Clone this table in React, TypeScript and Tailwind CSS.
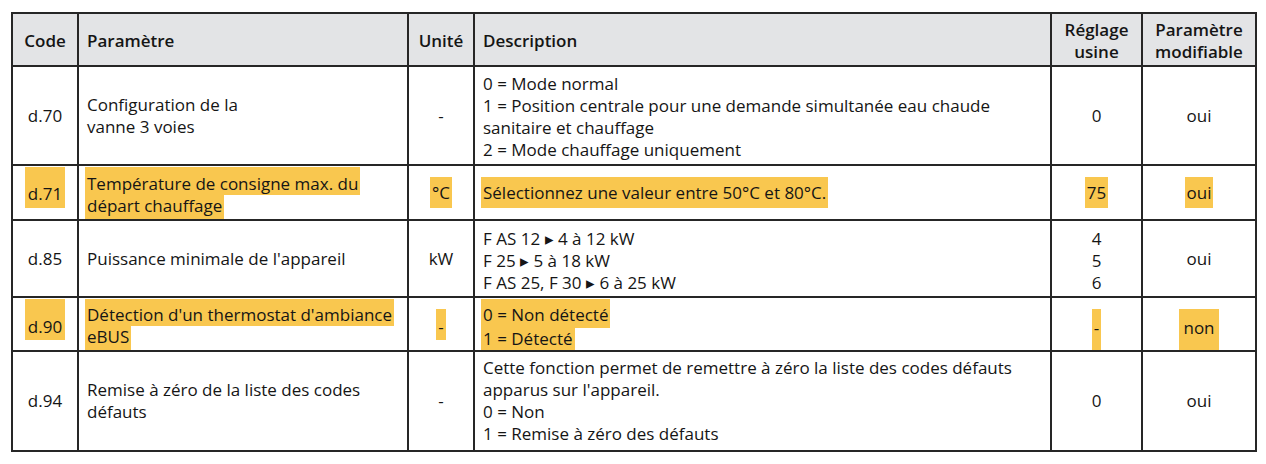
import type { ReactNode } from "react"

const hl = "bg-[#f9c74f]"

function Head({ children, align = "center" }: { children: ReactNode; align?: "left" | "center" }) {
  return (
    <div
      className={`bg-[#e3e4e6] flex items-center pt-[2px] font-semibold ${
        align === "left" ? "justify-start pl-2" : "justify-center text-center"
      }`}
    >
      <div>{children}</div>
    </div>
  )
}

function Cell({ children, className = "" }: { children: ReactNode; className?: string }) {
  return <div className={`bg-white flex ${className}`}>{children}</div>
}

export default function App() {
  return (
    <div className="w-[1266px] h-[464px] bg-white pt-[12px] pl-[11px] font-['Open_Sans',sans-serif] font-medium text-[17px] leading-[22px] text-[#151515]">
      <div className="grid w-[1246px] grid-cols-[64px_328px_64px_575px_89px_112px] grid-rows-[51px_97px_53px_75px_52px_98px] gap-[2px] p-[2px] bg-[#262626]">
        {/* header */}
        <Head>Code</Head>
        <Head align="left">Paramètre</Head>
        <Head>Unité</Head>
        <Head align="left">Description</Head>
        <Head>
          Réglage
          <br />
          usine
        </Head>
        <Head>
          Paramètre
          <br />
          modifiable
        </Head>

        {/* d.70 */}
        <Cell className="items-center justify-center">d.70</Cell>
        <Cell className="items-center pl-2">
          <div>
            Configuration de la
            <br />
            vanne 3 voies
          </div>
        </Cell>
        <Cell className="items-center justify-center">-</Cell>
        <Cell className="items-center pl-2 pt-[2px]">
          <div>
            <div>0 = Mode normal</div>
            <div>1 = Position centrale pour une demande simultanée eau chaude</div>
            <div>sanitaire et chauffage</div>
            <div>2 = Mode chauffage uniquement</div>
          </div>
        </Cell>
        <Cell className="items-center justify-center">0</Cell>
        <Cell className="items-center justify-center">oui</Cell>

        {/* d.71 */}
        <Cell className="items-start justify-center pt-[1px]">
          <span className={`${hl} px-[3px] pt-[16px] pb-[3px]`}>d.71</span>
        </Cell>
        <Cell className="flex-col items-start pt-[1px] pl-[6px]">
          <span className={`${hl} block px-[2px] pt-[6px]`}>Température de consigne max. du</span>
          <span className={`${hl} block px-[2px] pb-[2px]`}>départ chauffage</span>
        </Cell>
        <Cell className="items-start justify-center pt-[11px]">
          <span className={`${hl} px-[2px] pt-[5px] pb-[4px]`}>°C</span>
        </Cell>
        <Cell className="items-start pt-[11px] pl-[6px]">
          <span className={`${hl} px-[2px] pt-[5px] pb-[4px]`}>Sélectionnez une valeur entre 50°C et 80°C.</span>
        </Cell>
        <Cell className="items-start justify-center pt-[11px]">
          <span className={`${hl} px-[2px] pt-[5px] pb-[4px]`}>75</span>
        </Cell>
        <Cell className="items-start justify-center pt-[11px]">
          <span className={`${hl} px-[2px] pt-[5px] pb-[4px]`}>oui</span>
        </Cell>

        {/* d.85 */}
        <Cell className="items-center justify-center">d.85</Cell>
        <Cell className="items-center pl-2">Puissance minimale de l'appareil</Cell>
        <Cell className="items-center justify-center">kW</Cell>
        <Cell className="items-center pl-2 pt-[4px]">
          <div>
            <div>F AS 12 ▸ 4 à 12 kW</div>
            <div>F 25 ▸ 5 à 18 kW</div>
            <div>F AS 25, F 30 ▸ 6 à 25 kW</div>
          </div>
        </Cell>
        <Cell className="items-center justify-center pt-[4px]">
          <div className="text-center">
            <div>4</div>
            <div>5</div>
            <div>6</div>
          </div>
        </Cell>
        <Cell className="items-center justify-center">oui</Cell>

        {/* d.90 */}
        <Cell className="items-start justify-center pt-[1px]">
          <span className={`${hl} px-[3px] pt-[17px] pb-[2px]`}>d.90</span>
        </Cell>
        <Cell className="flex-col items-start pt-[1px] pl-[6px]">
          <span className={`${hl} block px-[2px] pt-[5px]`}>Détection d'un thermostat d'ambiance</span>
          <span className={`${hl} block px-[2px] pb-[2px]`}>eBUS</span>
        </Cell>
        <Cell className="items-start justify-center pt-[11px]">
          <span className={`${hl} px-[2px] pt-[7px] pb-[2px]`}>-</span>
        </Cell>
        <Cell className="flex-col items-start pt-[1px] pl-[6px]">
          <span className={`${hl} block px-[2px] pt-[5px] pb-[2px]`}>0 = Non détecté</span>
          <span className={`${hl} block px-[2px]`}>1 = Détecté</span>
        </Cell>
        <Cell className="items-start justify-center pt-[11px]">
          <span className={`${hl} px-[2px] pt-[8px] pb-[11px]`}>-</span>
        </Cell>
        <Cell className="items-start justify-center pt-[11px]">
          <span className={`${hl} px-[4px] pt-[8px] pb-[11px]`}>non</span>
        </Cell>

        {/* d.94 */}
        <Cell className="items-center justify-center">d.94</Cell>
        <Cell className="items-center pl-2">
          <div>
            Remise à zéro de la liste des codes
            <br />
            défauts
          </div>
        </Cell>
        <Cell className="items-center justify-center">-</Cell>
        <Cell className="items-center pl-2">
          <div>
            <div>Cette fonction permet de remettre à zéro la liste des codes défauts</div>
            <div>apparus sur l'appareil.</div>
            <div>0 = Non</div>
            <div>1 = Remise à zéro des défauts</div>
          </div>
        </Cell>
        <Cell className="items-center justify-center">0</Cell>
        <Cell className="items-center justify-center">oui</Cell>
      </div>
    </div>
  )
}
